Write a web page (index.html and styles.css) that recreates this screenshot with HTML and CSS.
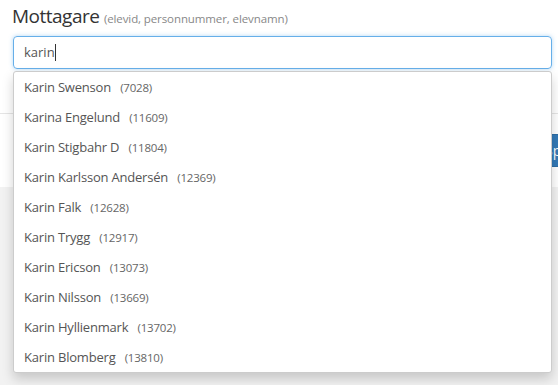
FILE: index.html
```html
<html>

<head>
  <title>Mottagare</title>
  <link rel="stylesheet" href="styles.css">
</head>

<body>
  <div class="modal">
    <div class="modal-body">
      <label class="title">Mottagare <small>(elevid, personnummer, elevnamn)</small></label>
      <div class="search">
        <div class="input">karin<span class="caret"></span></div>
        <ul class="menu">
          <li>Karin Swenson <span class="id">(7028)</span></li>
          <li>Karina Engelund <span class="id">(11609)</span></li>
          <li>Karin Stigbahr D <span class="id">(11804)</span></li>
          <li>Karin Karlsson Andersén <span class="id">(12369)</span></li>
          <li>Karin Falk <span class="id">(12628)</span></li>
          <li>Karin Trygg <span class="id">(12917)</span></li>
          <li>Karin Ericson <span class="id">(13073)</span></li>
          <li>Karin Nilsson <span class="id">(13669)</span></li>
          <li>Karin Hyllienmark <span class="id">(13702)</span></li>
          <li>Karin Blomberg <span class="id">(13810)</span></li>
        </ul>
      </div>
    </div>
    <div class="modal-footer">
      <button type="button">Spara</button>
    </div>
  </div>
</body>

</html>
```

FILE: styles.css
```css
body {
  margin: 0;
  background-color: #f2f2f2;
  font-family: "Open Sans", sans-serif;
  color: #555;
  overflow: hidden;
}

.modal {
  width: 600px;
  background-color: #fff;
}

.modal-body {
  padding: 3px 0 44px 13px;
}

.title {
  display: block;
  font-size: 19px;
  color: #333;
  margin-left: -1px;
  letter-spacing: -0.5px;
  height: 33px;
}

.title small {
  font-size: 11.5px;
  color: #888;
  letter-spacing: -0.1px;
}

.search {
  position: relative;
  width: 539px;
}

.input {
  height: 33px;
  box-sizing: border-box;
  border: 1px solid #66afe9;
  border-radius: 4px;
  box-shadow: 0 0 4px rgba(102, 175, 233, .5);
  padding: 6px 10px;
  font-size: 13px;
  line-height: 19px;
  color: #555;
}

.caret {
  display: inline-block;
  width: 1px;
  height: 17px;
  background-color: #333;
  vertical-align: -4px;
}

.menu {
  position: absolute;
  top: 35px;
  left: 0;
  width: 539px;
  box-sizing: border-box;
  margin: 0;
  padding: 0;
  list-style: none;
  background-color: #fff;
  border: 1px solid #ccc;
  border-radius: 3px;
  box-shadow: 0 6px 12px rgba(0, 0, 0, .175);
  z-index: 2;
}

.menu li {
  height: 30px;
  line-height: 30px;
  padding: 0 10px;
  font-size: 13px;
  color: #555;
  letter-spacing: -0.2px;
}

.menu .id {
  margin-left: 6px;
  font-size: 11.5px;
  color: #666;
}

.modal-footer {
  border-top: 1px solid #e5e5e5;
  padding: 20px 0 20px 532px;
}

button {
  height: 33px;
  padding: 0 12px;
  font-family: inherit;
  font-size: 14px;
  color: #fff;
  background-color: #337ab7;
  border: 1px solid #2e6da4;
  border-radius: 4px;
}
```
